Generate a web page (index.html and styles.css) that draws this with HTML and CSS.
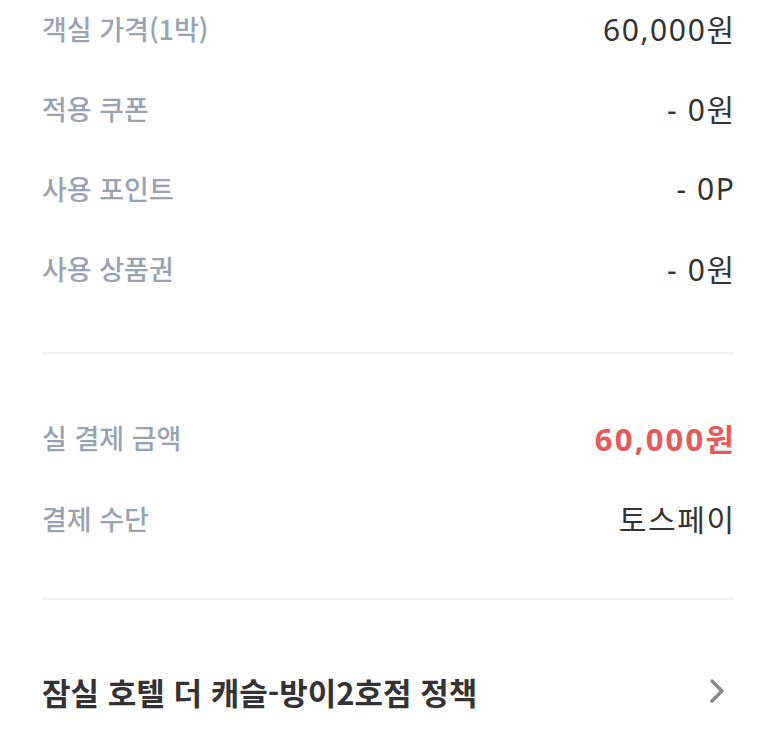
FILE: index.html
```html
<!DOCTYPE html>
<html lang="ko">
<head>
<meta charset="utf-8">
<link rel="stylesheet" href="styles.css">
</head>
<body>
<div class="page">
  <section class="group first">
    <div class="row"><span class="label">객실 가격(1박)</span><span class="value">60,000원</span></div>
    <div class="row"><span class="label">적용 쿠폰</span><span class="value">- 0원</span></div>
    <div class="row"><span class="label">사용 포인트</span><span class="value">- 0P</span></div>
    <div class="row"><span class="label">사용 상품권</span><span class="value">- 0원</span></div>
  </section>
  <hr class="divider">
  <section class="group second">
    <div class="row"><span class="label">실 결제 금액</span><span class="value total">60,000원</span></div>
    <div class="row"><span class="label">결제 수단</span><span class="value">토스페이</span></div>
  </section>
  <hr class="divider">
  <div class="policy">
    <span class="policy-title">잠실 호텔 더 캐슬-방이2호점 정책</span>
    <svg class="chev" width="18" height="28" viewBox="0 0 18 28"><path d="M4 4 L14 14 L4 24" fill="none" stroke="#8a8a8a" stroke-width="3.4" stroke-linecap="round" stroke-linejoin="round"/></svg>
  </div>
</div>
</body>
</html>
```

FILE: styles.css
```css
html, body {
  margin: 0;
  padding: 0;
  background: #ffffff;
}
body {
  font-family: "Noto Sans CJK KR", "Noto Sans", sans-serif;
  -webkit-font-smoothing: antialiased;
}
.page {
  padding: 8px 39px 0 42px;
}
.group {
  display: flex;
  flex-direction: column;
  gap: 40px;
}
.group.second {
  gap: 41px;
  margin-top: 63px;
}
.row {
  display: flex;
  justify-content: space-between;
  align-items: center;
  height: 40px;
}
.label {
  font-size: 27px;
  color: #9aa4b0;
  font-weight: 500;
}
.value {
  font-size: 30px;
  letter-spacing: 1.6px;
  margin-right: -1.6px;
  color: #333333;
  font-family: "Noto Sans", "Noto Sans CJK KR", sans-serif;
}
.value.total {
  font-size: 31px;
  color: #e55a5a;
  font-weight: 700;
  letter-spacing: 2.2px;
  margin-right: -2.2px;
}
.divider {
  border: 0;
  height: 2px;
  background: #f2f2f2;
  margin: 64px 0 0 0;
}
.group.second + .divider {
  margin-top: 60px;
}
.policy {
  display: flex;
  justify-content: space-between;
  align-items: center;
  height: 40px;
  margin-top: 71px;
  padding-right: 8px;
}
.policy-title {
  font-size: 31px;
  font-weight: 700;
  color: #333333;
}
.chev {
  display: block;
}
```
